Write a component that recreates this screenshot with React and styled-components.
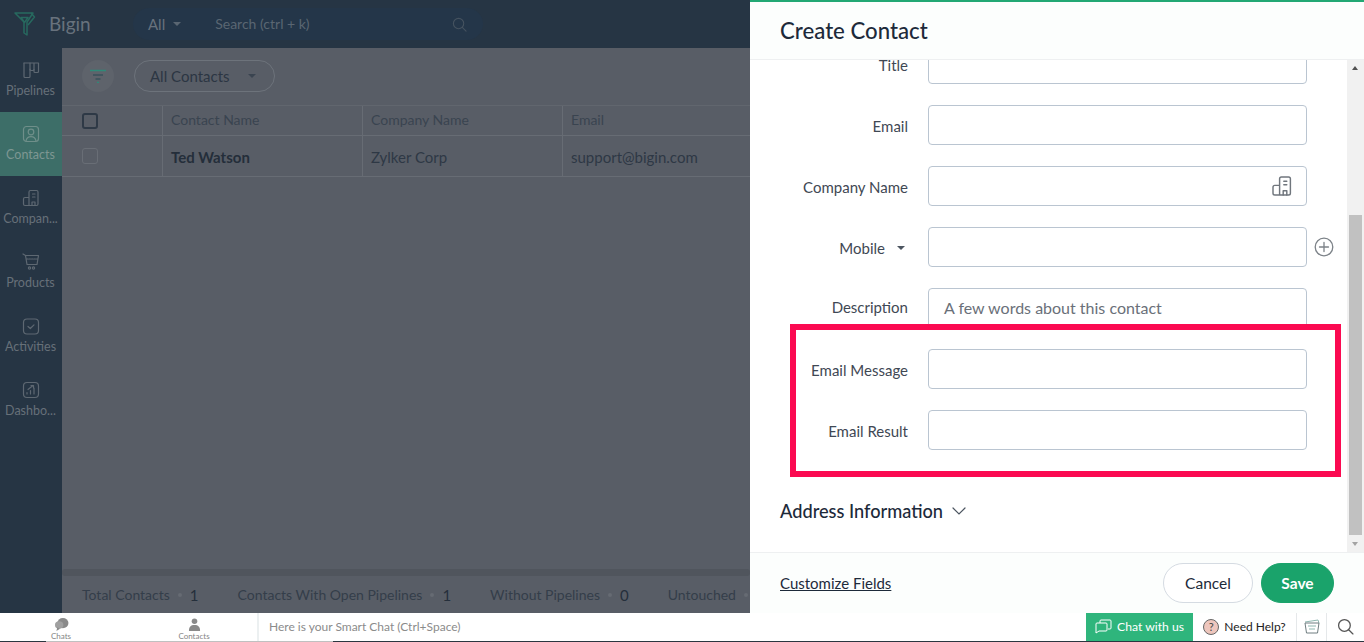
import React from 'react';
import styled, { createGlobalStyle } from 'styled-components';

const GlobalStyle = createGlobalStyle`
    html, body {
        margin: 0;
        padding: 0;
        height: 100%;
        overflow: hidden;
    }
    body {
        font-family: Lato, "Liberation Sans", sans-serif;
    }
    * {
        box-sizing: border-box;
    }
`;

const Page = styled.div`
    display: flex;
    flex-direction: column;
    width: 1364px;
    height: 642px;
    overflow: hidden;
    background: #fff;
`;

const Workspace = styled.div`
    display: flex;
    flex-direction: row;
    height: 613px;
`;

/* dimmed app behind the drawer */
const Shell = styled.div`
    display: flex;
    flex-direction: column;
    flex: 0 0 750px;
    overflow: hidden;
    background: #263544;
`;

const TopBar = styled.div`
    display: flex;
    align-items: center;
    height: 48px;
    flex: 0 0 48px;
    padding-left: 14px;
`;

const Brand = styled.div`
    font-size: 19px;
    color: #68727d;
    margin: 0 0 2px 13px;
    width: 84px;
`;

const SearchPill = styled.div`
    display: flex;
    align-items: center;
    width: 350px;
    height: 32px;
    border-radius: 16px;
    background: #243649;
    font-size: 14px;
    color: #5a6672;
`;

const ScopeText = styled.span`
    margin-left: 15px;
    font-size: 15px;
    color: #68727d;
`;

const Caret = styled.span`
    display: inline-block;
    width: 0;
    height: 0;
    border-left: 4px solid transparent;
    border-right: 4px solid transparent;
    border-top: 4px solid ${p => p.$color};
    margin-left: ${p => p.$gap}px;
`;

const SearchText = styled.span`
    margin: 0 0 2px 34px;
    flex: 1;
`;

const SearchIconWrap = styled.span`
    display: flex;
    margin-right: 16px;
`;

const ShellBody = styled.div`
    display: flex;
    flex: 1;
    min-height: 0;
`;

const Sidebar = styled.div`
    display: flex;
    flex-direction: column;
    flex: 0 0 62px;
`;

const NavItem = styled.div`
    display: flex;
    flex-direction: column;
    align-items: center;
    gap: 2px;
    height: 64px;
    padding: 12px 1px 0 0;
    background: ${p => (p.$active ? '#3d6e68' : 'transparent')};
    font-size: 12.5px;
    line-height: 18px;
    color: ${p => (p.$active ? '#7d9793' : '#667079')};
    white-space: nowrap;
`;

const Content = styled.div`
    display: flex;
    flex-direction: column;
    flex: 1;
    min-width: 0;
    background: #585d66;
`;

const FilterRow = styled.div`
    display: flex;
    align-items: center;
    height: 57px;
    flex: 0 0 57px;
    padding: 0 0 2px 20px;
    gap: 20px;
`;

const FilterButton = styled.div`
    display: flex;
    align-items: center;
    justify-content: center;
    width: 32px;
    height: 32px;
    border-radius: 50%;
    background: #5e636b;
`;

const ViewSelect = styled.div`
    display: flex;
    align-items: center;
    width: 141px;
    height: 32px;
    padding-left: 15px;
    border: 1px solid #6d737b;
    border-radius: 16px;
    font-size: 15px;
    color: #2c3643;
`;

const TableRow = styled.div`
    display: flex;
    height: ${p => p.$height}px;
    flex: 0 0 ${p => p.$height}px;
    border-top: ${p => (p.$head ? '1px solid #61666e' : '0')};
    border-bottom: 1px solid #676c74;
`;

const CheckCell = styled.div`
    display: flex;
    align-items: center;
    flex: 0 0 101px;
    padding-left: 20px;
    border-right: 1px solid #676c74;
`;

const Checkbox = styled.div`
    width: 16px;
    height: 16px;
    border-radius: 3px;
    border: ${p => (p.$strong ? '2px solid #2e3946' : '1px solid #696e76')};
`;

const Cell = styled.div`
    display: flex;
    align-items: center;
    flex: 0 0 200px;
    padding: ${p => (p.$head ? '0 0 3px 8px' : '2px 0 0 8px')};
    border-right: 1px solid #676c74;
    font-size: ${p => (p.$head ? 14 : 15)}px;
    font-weight: ${p => (p.$bold ? 700 : 400)};
    color: ${p => p.$color};
    white-space: nowrap;
`;

const TableFill = styled.div`
    flex: 1;
`;

const HScroll = styled.div`
    height: 7px;
    flex: 0 0 7px;
    background: #50555d;
    border-radius: 3px;
`;

const Summary = styled.div`
    display: flex;
    align-items: center;
    height: 37px;
    flex: 0 0 37px;
    padding-left: 20px;
    font-size: 14px;
    color: #343e4a;
    white-space: nowrap;
`;

const SummaryItem = styled.div`
    display: flex;
    align-items: center;
    margin-right: 39px;
`;

const Dot = styled.span`
    width: 4px;
    height: 4px;
    border-radius: 50%;
    background: #666b73;
    margin: 0 8px;
`;

const SummaryCount = styled.span`
    font-size: 15px;
    color: #252f3b;
`;

/* create contact drawer */
const Drawer = styled.div`
    display: flex;
    flex-direction: column;
    flex: 1;
    min-width: 0;
    position: relative;
    background: #fff;
`;

const DrawerHeader = styled.div`
    display: flex;
    align-items: center;
    height: 60px;
    flex: 0 0 60px;
    padding: 0 0 0 30px;
    background: #fcfefd;
    border-top: 2px solid #22a874;
    border-bottom: 1px solid #eef0f1;
    font-size: 22.2px;
    font-weight: 500;
    color: #1d2a3a;
`;

const DrawerBody = styled.div`
    display: flex;
    flex: 1;
    min-height: 0;
`;

const FormArea = styled.div`
    flex: 1;
    overflow: hidden;
    padding-left: 30px;
`;

const Form = styled.div`
    display: flex;
    flex-direction: column;
    gap: 21px;
    margin-top: -16px;
`;

const FieldRow = styled.div`
    display: flex;
    align-items: flex-start;
`;

const Label = styled.div`
    display: flex;
    justify-content: flex-end;
    align-items: center;
    flex: 0 0 128px;
    margin-right: 20px;
    padding-right: ${p => p.$inset || 0}px;
    line-height: 20px;
    margin-top: ${p => (p.$raised ? 9 : 11)}px;
    font-size: 15px;
    color: #3f4854;
    white-space: nowrap;
`;

const Input = styled.div`
    display: flex;
    align-items: center;
    justify-content: flex-end;
    width: 379px;
    height: 40px;
    padding: 0 12px 0 15px;
    border: 1px solid #bac5d1;
    border-radius: 4px;
    background: #fff;
`;

const Placeholder = styled.span`
    flex: 1;
    padding-bottom: 2px;
    font-size: 16px;
    color: #6a7079;
`;

const AddButton = styled.div`
    display: flex;
    margin: 10px 0 0 7px;
`;

const SectionTitle = styled.div`
    display: flex;
    align-items: center;
    gap: 9px;
    margin-top: 49px;
    font-size: 18.2px;
    font-weight: 500;
    line-height: 24px;
    color: #1d2a3a;
`;

const ScrollTrack = styled.div`
    position: relative;
    flex: 0 0 17px;
    background: #f1f1f1;
`;

const ScrollThumb = styled.div`
    position: absolute;
    top: 155px;
    left: 2px;
    width: 13px;
    height: 320px;
    background: #c1c1c1;
`;

const ScrollArrow = styled.div`
    position: absolute;
    left: 5px;
    ${p => (p.$up ? 'top: 6px;' : 'bottom: 6px;')}
    width: 0;
    height: 0;
    border-left: 3.5px solid transparent;
    border-right: 3.5px solid transparent;
    ${p => (p.$up ? 'border-bottom: 4px solid #505050;' : 'border-top: 4px solid #a3a3a3;')}
`;

const DrawerFooter = styled.div`
    display: flex;
    align-items: center;
    height: 61px;
    flex: 0 0 61px;
    padding: 0 30px;
    background: #fcfefd;
    border-top: 1px solid #eef0f1;
`;

const CustomizeLink = styled.a`
    font-size: 15px;
    color: #1d2a3a;
    text-decoration: underline;
    margin-right: auto;
`;

const PillButton = styled.button`
    display: flex;
    align-items: center;
    justify-content: center;
    width: ${p => p.$width}px;
    height: 40px;
    margin-left: 8px;
    padding: 0;
    border-radius: 20px;
    border: 1px solid ${p => (p.$primary ? '#1aa36b' : '#d5dbe2')};
    background: ${p => (p.$primary ? '#1aa36b' : '#fff')};
    color: ${p => (p.$primary ? '#fff' : '#1d2a3a')};
    font-family: inherit;
    font-size: 15.5px;
    font-weight: ${p => (p.$primary ? 700 : 400)};
`;

/* red annotation drawn on top of the screenshot */
const Highlight = styled.div`
    position: absolute;
    left: 40px;
    top: 324px;
    width: 551px;
    height: 153px;
    border: 6px solid #fb0a51;
`;

/* zoho cliq bar */
const CliqBar = styled.div`
    display: flex;
    flex-direction: column;
    height: 29px;
    flex: 0 0 29px;
    background: #fff;
`;

const CliqItems = styled.div`
    display: flex;
    align-items: stretch;
    flex: 1;
    min-height: 0;
`;

const WindowEdge = styled.div`
    height: 1px;
    flex: 0 0 1px;
    background: linear-gradient(to right, #2b3640 46px, #c0c0c0 46px, #c0c0c0 333px, #2b3640 333px);
`;

const CliqTabs = styled.div`
    display: flex;
    flex: 0 0 259px;
    gap: 12px;
    border-right: 2px solid #ecf0f1;
`;

const CliqTab = styled.div`
    display: flex;
    flex-direction: column;
    align-items: center;
    flex: 0 0 ${p => p.$width}px;
    padding-top: 5px;
    font-size: 8px;
    line-height: 10px;
    color: #858585;
`;

const SmartChat = styled.div`
    display: flex;
    align-items: center;
    flex: 1;
    padding: 0 0 1px 10px;
    font-size: 12px;
    color: #8b8b8b;
`;

const ChatButton = styled.div`
    display: flex;
    align-items: center;
    justify-content: center;
    gap: 5px;
    flex: 0 0 107px;
    padding-bottom: 1px;
    background: #2fb57c;
    color: #fff;
    font-size: 12.2px;
`;

const HelpButton = styled.div`
    display: flex;
    align-items: center;
    justify-content: center;
    gap: 5px;
    flex: 0 0 ${p => p.$width}px;
    padding-bottom: 1px;
    border-right: ${p => (p.$last ? '0' : '1px solid #e5e8ea')};
    color: #222;
    font-size: 12px;
`;

const HelpMark = styled.span`
    display: flex;
    align-items: center;
    justify-content: center;
    width: 16px;
    height: 16px;
    border-radius: 50%;
    background: #eec6bd;
    border: 1px solid #666;
    font-size: 11px;
    color: #444;
`;

const IconBase = ({ size = 20, color = '#5e6872', width = 1.2, children }) => (
    <svg width={size} height={size} viewBox="0 0 20 20" fill="none" stroke={color} strokeWidth={width} strokeLinecap="round" strokeLinejoin="round">
        {children}
    </svg>
);

const PipelinesIcon = () => (
    <IconBase>
        <path d="M3 3h14.500v8.500a1 1 0 0 1-1 1h-2.500a1 1 0 0 1-1-1V3" />
        <path d="M9 3v6.500a1 1 0 0 0 1 1h2a1 1 0 0 0 1-1" />
        <path d="M3 3v13.500a1 1 0 0 0 1 1h4a1 1 0 0 0 1-1V9" />
    </IconBase>
);

const ContactsIcon = () => (
    <IconBase color="#6f8f8a">
        <rect x="2.500" y="2.500" width="15" height="15" rx="3" />
        <circle cx="10" cy="8" r="2.800" />
        <path d="M5 17c.5-3 2.300-4.300 5-4.300s4.500 1.300 5 4.300" />
    </IconBase>
);

const CompanyIcon = ({ color, size }) => (
    <IconBase color={color} size={size}>
        <path d="M8 17.500V4a1.500 1.500 0 0 1 1.500-1.500h6A1.500 1.500 0 0 1 17 4v12a1.500 1.500 0 0 1-1.500 1.500H4A1.500 1.500 0 0 1 2.500 16v-5A1.500 1.500 0 0 1 4 9.500h4" />
        <path d="M11.500 6h2.500M11.500 9h2.500M11 17.500v-3.500h3v3.500" />
    </IconBase>
);

const ProductsIcon = () => (
    <IconBase>
        <path d="M2 2l2.500 1.500h13l-1.500 9H6L4.500 3.500" />
        <path d="M5.500 7h11" strokeDasharray="1.500 1" />
        <circle cx="8.500" cy="16" r="1.100" />
        <circle cx="12.500" cy="16" r="1.100" />
    </IconBase>
);

const ActivitiesIcon = () => (
    <IconBase>
        <rect x="2.500" y="3" width="15" height="15" rx="3.500" />
        <path d="M7 10.500l2.300 2 3.700-3.700" />
    </IconBase>
);

const DashboardIcon = () => (
    <IconBase>
        <rect x="2.500" y="2.500" width="15" height="15" rx="3.500" />
        <path d="M6 14v-1.500M9.500 14v-3.500M13 14V8M7 9.500L12 5.500M10 5.500h2.500V8" />
    </IconBase>
);

const FunnelLogo = () => (
    <svg width="22" height="24" viewBox="0 0 22 24" fill="none" stroke="#27695f" strokeWidth="1.500" strokeLinejoin="round">
        <path d="M1 1h18l-6 9v13l-3-2v-11L1 1z" />
        <path d="M7 5.500h7l-3.500 5zM17 1l3.500 4-6.500 8" />
    </svg>
);

const SearchGlyph = ({ color, size }) => (
    <svg width={size} height={size} viewBox="0 0 16 16" fill="none" stroke={color} strokeWidth="1.200" strokeLinecap="round">
        <circle cx="7" cy="7" r="5.500" />
        <path d="M11 11l4 4" />
    </svg>
);

const FilterIcon = () => (
    <svg width="16" height="14" viewBox="0 0 16 14" fill="none" strokeWidth="1.500">
        <path d="M0 1.500h16" stroke="#2f8a78" />
        <path d="M3 6h10" stroke="#39505a" />
        <path d="M5.500 10h5" stroke="#39505a" />
        <path d="M7 13.500h2" stroke="#2f8a78" />
    </svg>
);

const PlusCircle = () => (
    <svg width="20" height="20" viewBox="0 0 20 20" fill="none" stroke="#7c8288" strokeWidth="1.300" strokeLinecap="round">
        <circle cx="10" cy="10" r="8.800" />
        <path d="M10 5.500v9M5.500 10h9" />
    </svg>
);

const ChevronDown = () => (
    <svg width="14" height="8" viewBox="0 0 14 8" fill="none" stroke="#4c5560" strokeWidth="1.200" strokeLinecap="round">
        <path d="M1 1l6 6 6-6" />
    </svg>
);

const ChatsGlyph = () => (
    <svg width="15" height="14" viewBox="0 0 15 14" fill="#8a8a8a">
        <ellipse cx="9" cy="5.500" rx="6" ry="5.500" />
        <ellipse cx="5" cy="7.500" rx="4.500" ry="4" fill="#a0a0a0" />
        <path d="M3 10l-1 4 4-2.500z" />
    </svg>
);

const PersonGlyph = () => (
    <svg width="13" height="14" viewBox="0 0 13 14" fill="#8a8a8a">
        <circle cx="6.500" cy="3.500" r="3" />
        <path d="M.5 14c0-4.500 2-6.500 6-6.500s6 2 6 6.500z" />
    </svg>
);

const ChatBubbles = () => (
    <svg width="17" height="15" viewBox="0 0 17 15" fill="none" stroke="#fff" strokeWidth="1" strokeLinejoin="round">
        <path d="M5 4V2a1 1 0 0 1 1-1h9a1 1 0 0 1 1 1v7a1 1 0 0 1-1 1h-2" />
        <path d="M2 4h9a1 1 0 0 1 1 1v6a1 1 0 0 1-1 1H4l-3 2V5a1 1 0 0 1 1-1z" />
    </svg>
);

const NotesGlyph = () => (
    <svg width="16" height="15" viewBox="0 0 16 15" fill="none" stroke="#6f7d80" strokeWidth="1" strokeLinejoin="round">
        <path d="M1 3l13-2 1 3" stroke="#8fb7b0" />
        <path d="M1 4h14l-1.500 10h-11z" />
        <path d="M4 7h8M5 10h6" stroke="#8fb7b0" />
    </svg>
);

const navItems = [
    { label: 'Pipelines', icon: <PipelinesIcon /> },
    { label: 'Contacts', icon: <ContactsIcon />, active: true },
    { label: 'Compan...', icon: <CompanyIcon color="#5e6872" /> },
    { label: 'Products', icon: <ProductsIcon /> },
    { label: 'Activities', icon: <ActivitiesIcon /> },
    { label: 'Dashbo...', icon: <DashboardIcon /> },
];

const summary = [
    ['Total Contacts', '1'],
    ['Contacts With Open Pipelines', '1'],
    ['Without Pipelines', '0'],
    ['Untouched', ''],
];

class App extends React.Component {
    render() {
        return (
            <Page>
                <GlobalStyle />
                <Workspace>
                    <Shell>
                        <TopBar>
                            <FunnelLogo />
                            <Brand>Bigin</Brand>
                            <SearchPill>
                                <ScopeText>All</ScopeText>
                                <Caret $color="#5a6672" $gap={8} />
                                <SearchText>Search (ctrl + k)</SearchText>
                                <SearchIconWrap><SearchGlyph color="#45525f" size={15} /></SearchIconWrap>
                            </SearchPill>
                        </TopBar>
                        <ShellBody>
                            <Sidebar>
                                {navItems.map(item => (
                                    <NavItem key={item.label} $active={item.active}>
                                        {item.icon}
                                        {item.label}
                                    </NavItem>
                                ))}
                            </Sidebar>
                            <Content>
                                <FilterRow>
                                    <FilterButton><FilterIcon /></FilterButton>
                                    <ViewSelect>
                                        All Contacts
                                        <Caret $color="#3a4450" $gap={18} />
                                    </ViewSelect>
                                </FilterRow>
                                <TableRow $height={31} $head>
                                    <CheckCell><Checkbox $strong /></CheckCell>
                                    <Cell $head $color="#3a4450">Contact Name</Cell>
                                    <Cell $head $color="#3a4450">Company Name</Cell>
                                    <Cell $head $color="#3a4450">Email</Cell>
                                </TableRow>
                                <TableRow $height={41}>
                                    <CheckCell><Checkbox /></CheckCell>
                                    <Cell $bold $color="#242e3a">Ted Watson</Cell>
                                    <Cell $color="#2e3845">Zylker Corp</Cell>
                                    <Cell $color="#2e3845">support@bigin.com</Cell>
                                </TableRow>
                                <TableFill />
                                <HScroll />
                                <Summary>
                                    {summary.map(([name, count]) => (
                                        <SummaryItem key={name}>
                                            {name}
                                            <Dot />
                                            <SummaryCount>{count}</SummaryCount>
                                        </SummaryItem>
                                    ))}
                                </Summary>
                            </Content>
                        </ShellBody>
                    </Shell>
                    <Drawer>
                        <DrawerHeader>Create Contact</DrawerHeader>
                        <DrawerBody>
                            <FormArea>
                                <Form>
                                    <FieldRow>
                                        <Label>Title</Label>
                                        <Input />
                                    </FieldRow>
                                    <FieldRow>
                                        <Label>Email</Label>
                                        <Input />
                                    </FieldRow>
                                    <FieldRow>
                                        <Label>Company Name</Label>
                                        <Input><CompanyIcon color="#70767d" size={24} /></Input>
                                    </FieldRow>
                                    <FieldRow>
                                        <Label $inset={3}>Mobile<Caret $color="#4c5560" $gap={12} /></Label>
                                        <Input />
                                        <AddButton><PlusCircle /></AddButton>
                                    </FieldRow>
                                    <FieldRow>
                                        <Label $raised>Description</Label>
                                        <Input><Placeholder>A few words about this contact</Placeholder></Input>
                                    </FieldRow>
                                    <FieldRow>
                                        <Label>Email Message</Label>
                                        <Input />
                                    </FieldRow>
                                    <FieldRow>
                                        <Label>Email Result</Label>
                                        <Input />
                                    </FieldRow>
                                </Form>
                                <SectionTitle>Address Information<ChevronDown /></SectionTitle>
                            </FormArea>
                            <ScrollTrack>
                                <ScrollArrow $up />
                                <ScrollThumb />
                                <ScrollArrow />
                            </ScrollTrack>
                        </DrawerBody>
                        <DrawerFooter>
                            <CustomizeLink>Customize Fields</CustomizeLink>
                            <PillButton $width={90}>Cancel</PillButton>
                            <PillButton $width={73} $primary>Save</PillButton>
                        </DrawerFooter>
                        <Highlight />
                    </Drawer>
                </Workspace>
                <CliqBar>
                    <CliqItems>
                        <CliqTabs>
                            <CliqTab $width={122}><ChatsGlyph />Chats</CliqTab>
                            <CliqTab $width={120}><PersonGlyph />Contacts</CliqTab>
                        </CliqTabs>
                        <SmartChat>Here is your Smart Chat (Ctrl+Space)</SmartChat>
                        <ChatButton><ChatBubbles />Chat with us</ChatButton>
                        <HelpButton $width={104}><HelpMark>?</HelpMark>Need Help?</HelpButton>
                        <HelpButton $width={30}><NotesGlyph /></HelpButton>
                        <HelpButton $width={37} $last><SearchGlyph color="#555" size={17} /></HelpButton>
                    </CliqItems>
                    <WindowEdge />
                </CliqBar>
            </Page>
        );
    }
}

export default App;
